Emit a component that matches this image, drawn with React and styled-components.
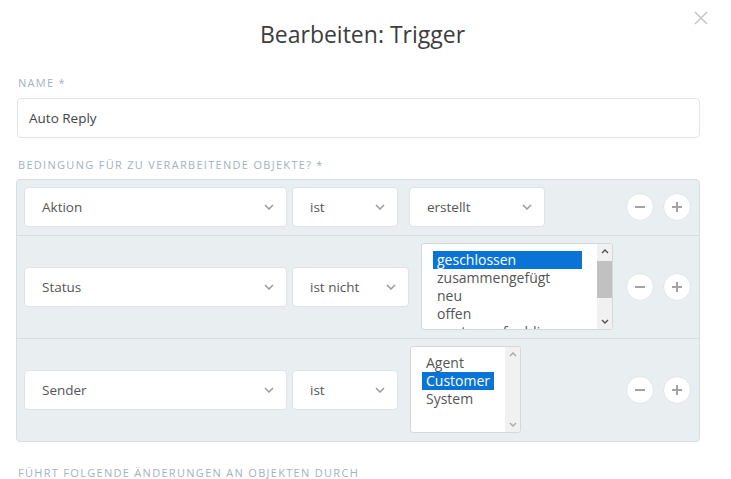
import React from 'react';
import styled, { createGlobalStyle } from 'styled-components';

const GlobalStyle = createGlobalStyle`
  html, body {
    margin: 0;
    padding: 0;
    background: #ffffff;
  }
  body {
    font-family: 'Open Sans', 'Liberation Sans', sans-serif;
    color: #585858;
  }
  * {
    box-sizing: border-box;
  }
`;

const Modal = styled.div`
  position: relative;
  width: 731px;
  height: 479px;
  overflow: hidden;
  background: #ffffff;
`;

const Header = styled.header`
  height: 76px;
  padding-top: 20px;
  padding-right: 6px;
  text-align: center;
`;

const Title = styled.h1`
  margin: 0;
  font-size: 23px;
  line-height: 28px;
  font-weight: 400;
  color: #3d3d3d;
`;

const CloseButton = styled.button`
  position: absolute;
  top: 11px;
  right: 23px;
  width: 14px;
  height: 14px;
  padding: 0;
  border: 0;
  background: none;
  display: flex;
  cursor: pointer;
`;

const Body = styled.div`
  padding: 0 31px 0 16px;
`;

const Label = styled.div`
  font-size: 11px;
  line-height: 14px;
  letter-spacing: 1.3px;
  text-transform: uppercase;
  color: #a2b2be;
  padding-left: 2px;
  margin-top: ${(p) => p.$top || 0}px;
  margin-bottom: ${(p) => p.$bottom || 0}px;
`;

const TextInput = styled.div`
  margin-left: 1px;
  height: 40px;
  border: 1px solid #e2e4e6;
  border-radius: 4px;
  padding: 0 11px;
  display: flex;
  align-items: center;
  font-size: 13.5px;
  color: #444;
`;

const ConditionBox = styled.div`
  border: 1px solid #d6dee3;
  border-radius: 4px;
  background: #e9eef1;
`;

const Row = styled.div`
  display: flex;
  align-items: center;
  padding: 7px 8px 8px 7px;
  border-bottom: ${(p) => (p.$last ? 'none' : '1px solid #d6dee3')};
`;

const Select = styled.div`
  width: ${(p) => p.$width}px;
  height: 40px;
  flex-shrink: 0;
  margin-right: ${(p) => p.$gap || 0}px;
  background: #ffffff;
  border: 1px solid #dde3e7;
  border-radius: 4px;
  padding: 0 12px 0 17px;
  display: flex;
  align-items: center;
  justify-content: space-between;
  font-size: 13.5px;
  color: #555;
`;

const ListBox = styled.div`
  width: ${(p) => p.$width}px;
  height: 87px;
  flex-shrink: 0;
  background: #ffffff;
  border: 1px solid #d3d8dc;
  border-radius: 3px;
  display: flex;
  overflow: hidden;
`;

const OptionArea = styled.div`
  flex: 1;
  padding: 7px 11px;
  overflow: hidden;
`;

const OptionStack = styled.div`
  width: max-content;
`;

const Option = styled.div`
  padding: 0 4px;
  font-size: 14px;
  line-height: 18px;
  white-space: nowrap;
  color: ${(p) => (p.$selected ? '#ffffff' : '#555')};
  background: ${(p) => (p.$selected ? '#0a74d6' : 'transparent')};
`;

const Scrollbar = styled.div`
  width: 15px;
  flex-shrink: 0;
  background: #f1f1f1;
  display: flex;
  flex-direction: column;
`;

const ScrollArrow = styled.div`
  height: 15px;
  display: flex;
  align-items: center;
  justify-content: center;
`;

const ScrollTrack = styled.div`
  flex: 1;
  padding-top: 2px;
`;

const Thumb = styled.div`
  height: 37px;
  background: #c1c1c1;
`;

const Actions = styled.div`
  margin-left: auto;
  display: flex;
  gap: 9px;
`;

const RoundButton = styled.button`
  width: 28px;
  height: 28px;
  padding: 0;
  border-radius: 50%;
  border: 1px solid #dfe5e9;
  background: #ffffff;
  display: flex;
  align-items: center;
  justify-content: center;
  cursor: pointer;
`;

const Chevron = () => (
  <svg width="10" height="6" viewBox="0 0 10 6">
    <path d="M1 1l4 4 4-4" fill="none" stroke="#9a9a9a" strokeWidth="1.5" />
  </svg>
);

const SmallArrow = ({ up, color }) => (
  <svg width="8" height="5" viewBox="0 0 8 5">
    <path
      d={up ? 'M1 4l3-3 3 3' : 'M1 1l3 3 3-3'}
      fill="none"
      stroke={color}
      strokeWidth="1.4"
    />
  </svg>
);

const MinusIcon = () => (
  <svg width="12" height="12" viewBox="0 0 12 12">
    <path d="M1 6h10" stroke="#a3a3a3" strokeWidth="2" />
  </svg>
);

const PlusIcon = () => (
  <svg width="12" height="12" viewBox="0 0 12 12">
    <path d="M1 6h10M6 1v10" stroke="#a3a3a3" strokeWidth="2" />
  </svg>
);

const SelectField = ({ value, width, gap }) => (
  <Select $width={width} $gap={gap}>
    <span>{value}</span>
    <Chevron />
  </Select>
);

const MultiList = ({ options, selected, width, scrollable }) => {
  const arrowColor = scrollable ? '#505050' : '#a8a8a8';
  return (
    <ListBox $width={width}>
      <OptionArea>
        <OptionStack>
          {options.map((o) => (
            <Option key={o} $selected={o === selected}>
              {o}
            </Option>
          ))}
        </OptionStack>
      </OptionArea>
      <Scrollbar>
        <ScrollArrow>
          <SmallArrow up color={arrowColor} />
        </ScrollArrow>
        <ScrollTrack>{scrollable && <Thumb />}</ScrollTrack>
        <ScrollArrow>
          <SmallArrow color={arrowColor} />
        </ScrollArrow>
      </Scrollbar>
    </ListBox>
  );
};

const RowActions = () => (
  <Actions>
    <RoundButton aria-label="Entfernen">
      <MinusIcon />
    </RoundButton>
    <RoundButton aria-label="Hinzufügen">
      <PlusIcon />
    </RoundButton>
  </Actions>
);

export default function App() {
  return (
    <Modal>
      <GlobalStyle />
      <Header>
        <Title>Bearbeiten: Trigger</Title>
      </Header>
      <CloseButton aria-label="Schließen">
        <svg width="14" height="14" viewBox="0 0 14 14">
          <path d="M1 1l12 12M13 1L1 13" stroke="#c6c6c6" strokeWidth="1.5" />
        </svg>
      </CloseButton>
      <Body>
        <Label $bottom={8}>Name *</Label>
        <TextInput>Auto Reply</TextInput>
        <Label $top={20} $bottom={7}>
          Bedingung für zu verarbeitende Objekte? *
        </Label>
        <ConditionBox>
          <Row>
            <SelectField value="Aktion" width={263} gap={5} />
            <SelectField value="ist" width={106} gap={11} />
            <SelectField value="erstellt" width={136} />
            <RowActions />
          </Row>
          <Row>
            <SelectField value="Status" width={263} gap={5} />
            <SelectField value="ist nicht" width={117} gap={12} />
            <MultiList
              width={192}
              scrollable
              selected="geschlossen"
              options={['geschlossen', 'zusammengefügt', 'neu', 'offen', 'warten auf schliessen']}
            />
            <RowActions />
          </Row>
          <Row $last>
            <SelectField value="Sender" width={263} gap={5} />
            <SelectField value="ist" width={106} gap={12} />
            <MultiList width={111} selected="Customer" options={['Agent', 'Customer', 'System']} />
            <RowActions />
          </Row>
        </ConditionBox>
        <Label $top={24}>Führt folgende Änderungen an Objekten durch</Label>
      </Body>
    </Modal>
  );
}
